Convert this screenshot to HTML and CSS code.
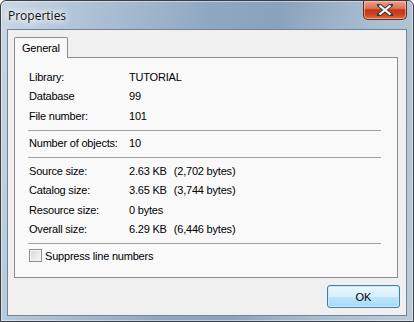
FILE: index.html
```html
<!DOCTYPE html>
<html lang="en">

<head>
    <meta charset="UTF-8">
    <title>Properties</title>
    <link rel="stylesheet" href="styles.css">
</head>

<body>
    <div class="window">
        <div class="titlebar">
            <span class="title">Properties</span>
            <div class="close">
                <svg width="16" height="12" viewBox="0 0 16 12">
                    <path d="M2 1 L14 11 M14 1 L2 11" stroke="#3a3a3a" stroke-width="4" stroke-linecap="square" />
                    <path d="M2.5 1.5 L13.5 10.5 M13.5 1.5 L2.5 10.5" stroke="#fff" stroke-width="2.2" />
                </svg>
            </div>
        </div>
        <div class="client">
            <div class="tabs">
                <div class="tab">General</div>
            </div>
            <div class="panel">
                <div class="group">
                    <div class="row"><span class="label">Library:</span><span>TUTORIAL</span></div>
                    <div class="row"><span class="label">Database</span><span>99</span></div>
                    <div class="row"><span class="label">File number:</span><span>101</span></div>
                </div>
                <div class="sep"></div>
                <div class="group">
                    <div class="row"><span class="label">Number of objects:</span><span>10</span></div>
                </div>
                <div class="sep"></div>
                <div class="group">
                    <div class="row"><span class="label">Source size:</span><span>2.63 KB<span class="bytes">(2,702 bytes)</span></span></div>
                    <div class="row"><span class="label">Catalog size:</span><span>3.65 KB<span class="bytes">(3,744 bytes)</span></span></div>
                    <div class="row"><span class="label">Resource size:</span><span>0 bytes</span></div>
                    <div class="row"><span class="label">Overall size:</span><span>6.29 KB<span class="bytes">(6,446 bytes)</span></span></div>
                </div>
                <div class="sep"></div>
                <label class="check">
                    <span class="box"></span>
                    Suppress line numbers
                </label>
            </div>
            <div class="buttons">
                <button class="ok">OK</button>
            </div>
        </div>
    </div>
</body>

</html>
```

FILE: styles.css
```css
body {
    margin: 0;
    padding: 0;
    width: 414px;
    height: 322px;
    overflow: hidden;
    font-family: "Liberation Sans", Arial, sans-serif;
    font-size: 11px;
    letter-spacing: -0.2px;
    color: #000;
}

.window {
    box-sizing: border-box;
    width: 414px;
    height: 322px;
    border: 1px solid #3b3f45;
    border-radius: 6px 6px 0 0;
    background: linear-gradient(100deg, #c9d7e5 0%, #b3c6d9 15%, #8fa8c2 45%, #8aa3bd 60%, #a9bdd1 80%, #bccbda 100%);
    display: flex;
    flex-direction: column;
    box-shadow: inset 0 0 0 1px rgba(255, 255, 255, 0.45);
}

.titlebar {
    height: 28px;
    display: flex;
    align-items: flex-start;
    justify-content: space-between;
}

.title {
    font-family: "Open Sans", "Noto Sans", sans-serif;
    font-size: 12px;
    letter-spacing: 0;
    color: #111;
    margin: 6px 0 0 7px;
    text-shadow: 0 0 6px #fff, 0 0 8px #fff, 0 0 10px #fff;
}

.close {
    width: 44px;
    height: 19px;
    margin-right: 6px;
    box-sizing: border-box;
    border: 1px solid #6a2a1e;
    border-top: none;
    border-radius: 0 0 5px 5px;
    background: linear-gradient(#eba08a 0%, #dc7458 40%, #c2361a 50%, #cc4222 75%, #e0703f 100%);
    display: flex;
    align-items: center;
    justify-content: center;
    box-shadow: inset 0 0 0 1px rgba(255, 220, 200, 0.5);
}

.client {
    flex: 1;
    margin: 0 6px 5px 6px;
    border: 1px solid #71839a;
    background: #f0f0f0;
    display: flex;
    flex-direction: column;
    padding: 7px 8px 0 6px;
}

.tabs {
    display: flex;
    height: 20px;
}

.tab {
    box-sizing: border-box;
    width: 54px;
    height: 21px;
    border: 1px solid #898c95;
    border-bottom: none;
    border-radius: 2px 2px 0 0;
    background: #f9f9f9;
    padding: 4px 0 0 7px;
    position: relative;
    z-index: 1;
}

.panel {
    box-sizing: border-box;
    height: 221px;
    border: 1px solid #898c95;
    background: #f9f9f9;
    padding: 9px 16px 0 14px;
}

.row {
    display: flex;
    height: 19.5px;
    align-items: center;
}

.label {
    width: 100px;
}

.bytes {
    margin-left: 7px;
}

.sep {
    height: 1px;
    background: #a0a0a0;
    margin: 4px 0 3px -1px;
}

.check {
    display: flex;
    align-items: center;
    height: 17px;
    gap: 3px;
    margin-top: 2px;
}

.box {
    box-sizing: border-box;
    width: 13px;
    height: 13px;
    border: 1px solid #8e8f8f;
    background: linear-gradient(135deg, #d8d8d8, #f6f6f6);
    box-shadow: inset 0 0 0 1px #f4f4f4;
}

.buttons {
    display: flex;
    justify-content: flex-end;
    padding-top: 7px;
}

.ok {
    width: 73px;
    height: 23px;
    margin-right: -2px;
    font-family: "Liberation Sans", Arial, sans-serif;
    font-size: 11px;
    color: #000;
    border: 1px solid #3c7fb1;
    border-radius: 3px;
    background: linear-gradient(#eaf6fd 0%, #d9f0fc 50%, #bee6fd 51%, #a7d9f5 100%);
    box-shadow: inset 0 0 0 1px #c9ecfd;
    padding: 0;
}
```
